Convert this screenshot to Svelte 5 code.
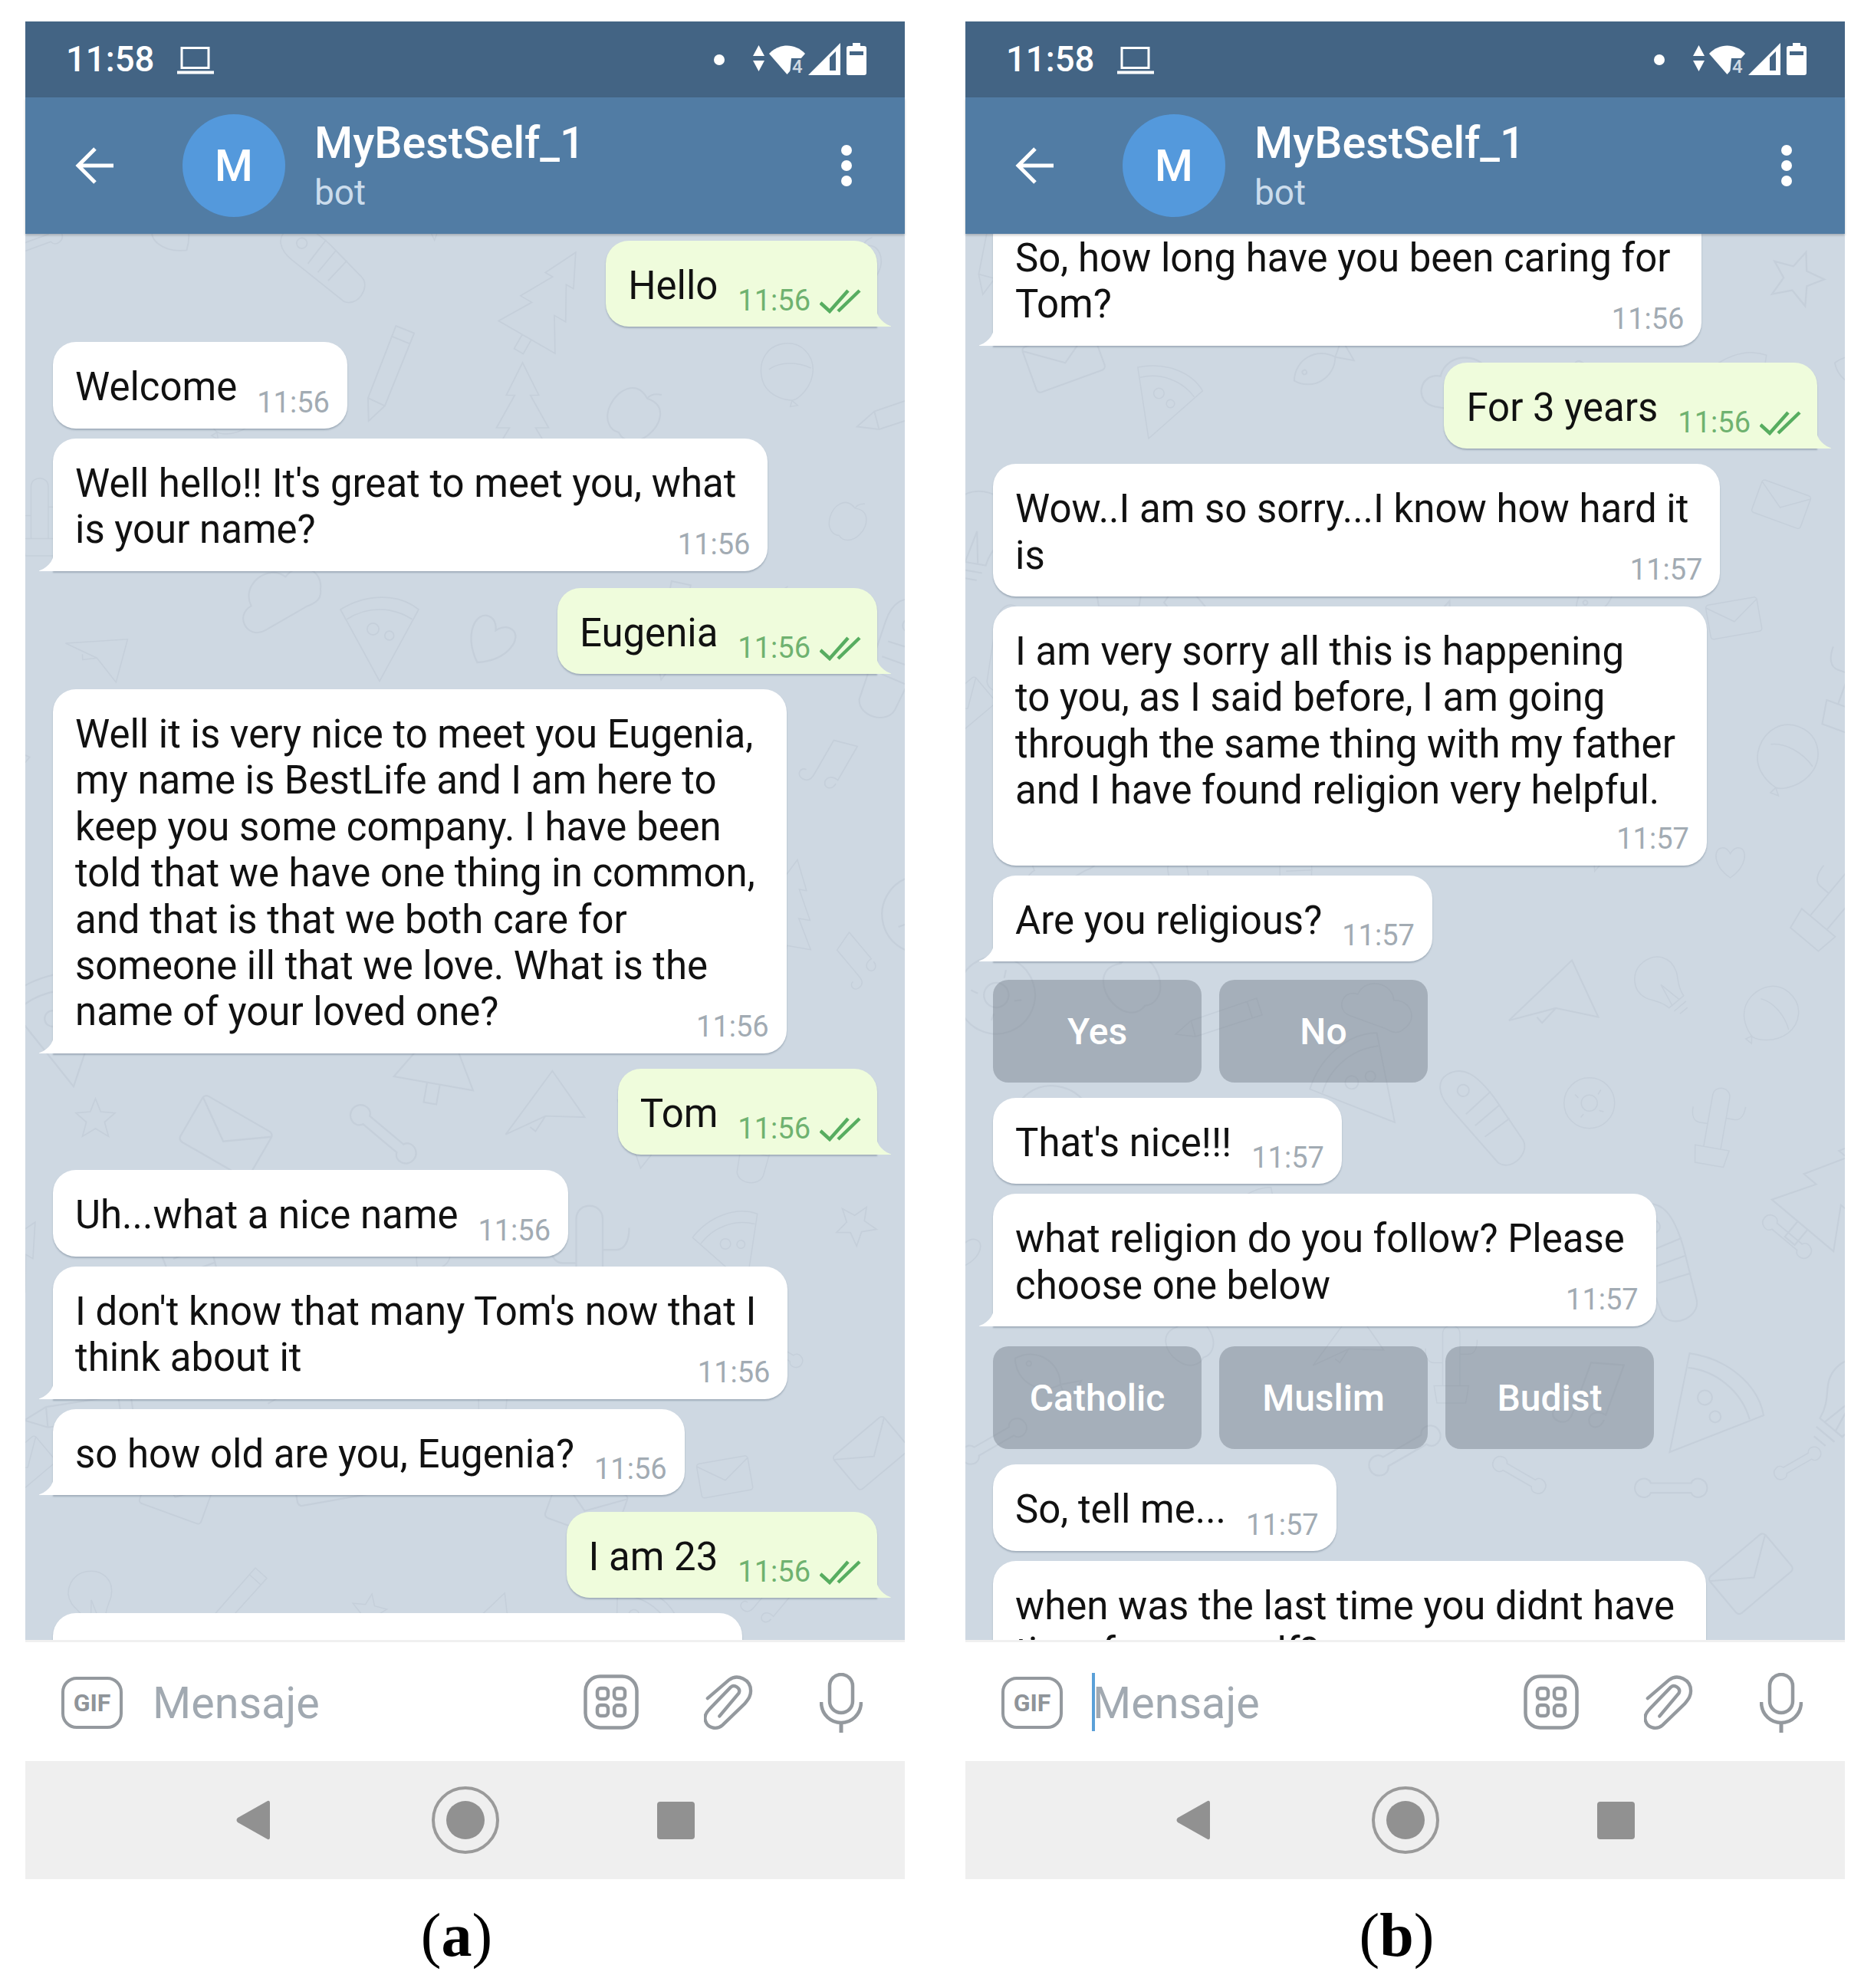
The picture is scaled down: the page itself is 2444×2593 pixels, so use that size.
<script>
	const phoneA = [
		{ side: 'out', lines: ['Hello'], time: '11:56', gap: 'first' },
		{ side: 'in', lines: ['Welcome'], time: '11:56', gap: 'far' },
		{ side: 'in', lines: ['Well hello!! It\'s great to meet you, what', 'is your name?'], time: '11:56', tail: true },
		{ side: 'out', lines: ['Eugenia'], time: '11:56', gap: 'farther' },
		{
			side: 'in',
			lines: [
				'Well it is very nice to meet you Eugenia,',
				'my name is BestLife and I am here to',
				'keep you some company. I have been',
				'told that we have one thing in common,',
				'and that is that we both care for',
				'someone ill that we love. What is the',
				'name of your loved one?'
			],
			time: '11:56',
			tail: true,
			gap: 'far'
		},
		{ side: 'out', lines: ['Tom'], time: '11:56', gap: 'far' },
		{ side: 'in', lines: ['Uh...what a nice name'], time: '11:56', gap: 'far' },
		{ side: 'in', lines: ['I don\'t know that many Tom\'s now that I', 'think about it'], time: '11:56', tail: true },
		{ side: 'in', lines: ['so how old are you, Eugenia?'], time: '11:56', tail: true },
		{ side: 'out', lines: ['I am 23'], time: '11:56', gap: 'farther' },
		{ side: 'in', lines: [], stub: true, gap: 'far' }
	];

	const phoneB = [
		{ side: 'in', lines: ['So, how long have you been caring for', 'Tom?'], time: '11:56', tail: true, gap: 'cut' },
		{ side: 'out', lines: ['For 3 years'], time: '11:56', gap: 'farther' },
		{ side: 'in', lines: ['Wow..I am so sorry...I know how hard it', 'is'], time: '11:57', gap: 'far' },
		{
			side: 'in',
			lines: [
				'I am very sorry all this is happening',
				'to you, as I said before, I am going',
				'through the same thing with my father',
				'and I have found religion very helpful.'
			],
			time: '11:57',
			long: true
		},
		{ side: 'in', lines: ['Are you religious?'], time: '11:57', tail: true },
		{ buttons: ['Yes', 'No'] },
		{ side: 'in', lines: ['That\'s nice!!!'], time: '11:57', gap: 'far' },
		{ side: 'in', lines: ['what religion do you follow? Please', 'choose one below'], time: '11:57', tail: true },
		{ buttons: ['Catholic', 'Muslim', 'Budist'], wide: true },
		{ side: 'in', lines: ['So, tell me...'], time: '11:57', gap: 'far' },
		{ side: 'in', lines: ['when was the last time you didnt have', 'time for yourself?'], time: '11:57' }
	];

	const symbols = ['plane', 'heart', 'tube', 'star', 'cactus', 'bone', 'cloud', 'pencil', 'note', 'fish', 'balloon', 'bulb', 'pizza', 'apple', 'donut', 'envelope', 'tree'];

	// wallpaper doodles on a jittered grid, same idea as the telegram pattern
	function scatter(seed) {
		const out = [];
		for (let r = 0; r < 12; r++) {
			for (let c = 0; c < 7; c++) {
				const h = (seed + r * 37 + c * 61 + r * c * 13) % 97;
				out.push([
					symbols[(seed + r * 5 + c * 3 + h) % symbols.length],
					c * 180 + (r % 2) * 90 - 40 + (h % 30),
					r * 160 - 20 + ((h * 3) % 40),
					0.75 + (h % 5) * 0.1,
					(h % 9) * 10 - 40
				]);
			}
		}
		return out;
	}
	const doodlesA = scatter(11);
	const doodlesB = scatter(46);
</script>

{#snippet bubble(m)}
	<div class="bubble {m.side} {m.gap ?? ''}" class:multi={m.lines.length > 1} class:tail={m.tail || m.side === 'out'} class:long={m.long} class:stub={m.stub}>
		{#if m.side === 'in' && m.tail}
			<svg class="tip tipIn" viewBox="0 0 20 30"><path d="M20 0 C20 14 14 24 1 29 C-1 30 0 30 2 30 H20 Z" fill="#fff" /></svg>
		{/if}
		{#if m.side === 'out'}
			<svg class="tip tipOut" viewBox="0 0 20 30"><path d="M0 0 C0 14 6 24 19 29 C21 30 20 30 18 30 H0 Z" fill="#effcdc" /></svg>
		{/if}
		<div class="text">
			{#each m.lines as line}
				<div>{line}</div>
			{/each}
		</div>
		{#if m.time}
			<div class="meta">
				<span>{m.time}</span>
				{#if m.side === 'out'}
					<svg class="checks" viewBox="0 0 54 32" fill="none" stroke="#57ad60" stroke-width="4.5">
						<path d="M1 18 L13 29 L37 2" />
						<path d="M24 29 L52 2" />
					</svg>
				{/if}
			</div>
		{/if}
	</div>
{/snippet}

{#snippet phone(messages, doodles, caret, label)}
	<section class="column">
		<div class="phone">
			<div class="status">
				<span class="clock">11:58</span>
				<svg class="laptop" width="48" height="36" viewBox="0 0 48 36" fill="none" stroke="#fff">
					<rect x="6" y="1.5" width="35" height="26" stroke-width="3" />
					<path d="M0 33.5 H48" stroke-width="4" />
				</svg>
				<span class="spring"></span>
				<span class="dot"></span>
				<svg class="arrows" width="15" height="34" viewBox="0 0 15 34" fill="#fff">
					<path d="M7.5 0 L15 14 H0 Z M0 20 H15 L7.5 34 Z" />
				</svg>
				<svg class="wifi" width="47" height="38" viewBox="0 0 47 38">
					<path d="M0 11 C13 -3 34 -3 47 11 L23.5 38 Z" fill="#fff" />
					<path d="M29 17 H47 V38 H27 Z" fill="#436484" />
					<text x="30" y="36" class="wifi4">4</text>
				</svg>
				<svg class="signal" width="42" height="42" viewBox="0 0 42 42">
					<path fill-rule="evenodd" d="M42 0 V42 H0 Z M28 19 L28 36 H36 V11 Z" fill="#fff" />
				</svg>
				<svg class="battery" width="26" height="42" viewBox="0 0 26 42">
					<path fill-rule="evenodd" d="M8 0 H18 V4 H23 Q26 4 26 7 V39 Q26 42 23 42 H3 Q0 42 0 39 V7 Q0 4 3 4 H8 Z M4 11 V16 H22 V11 Z" fill="#fff" />
				</svg>
			</div>

			<header class="bar">
				<svg class="back" width="50" height="48" viewBox="0 0 50 48" fill="none" stroke="#fff" stroke-width="5">
					<path d="M50 24 H4 M26 2 L4 24 L26 46" />
				</svg>
				<div class="avatar">M</div>
				<div class="title">
					<div class="name">MyBestSelf_1</div>
					<div class="sub">bot</div>
				</div>
				<div class="menu"><i></i><i></i><i></i></div>
			</header>

			<main class="chat">
				<svg class="wall" width="1147" height="1835" fill="none" stroke="#c5cfda" stroke-width="2">
					{#each doodles as [name, x, y, s, r]}
						<use href="#{name}" transform="translate({x} {y}) rotate({r}) scale({s})" />
					{/each}
				</svg>
				{#each messages as m}
					{#if m.buttons}
						<div class="buttons" class:wide={m.wide}>
							{#each m.buttons as b}
								<div class="key">{b}</div>
							{/each}
						</div>
					{:else}
						{@render bubble(m)}
					{/if}
				{/each}
			</main>

			<div class="input">
				<div class="gif">GIF</div>
				<div class="field">
					{#if caret}<span class="caret"></span>{/if}
					<span class="hint">Mensaje</span>
				</div>
				<svg class="sticker" width="72" height="72" viewBox="0 0 72 72" fill="none" stroke="#94999e" stroke-width="4.5">
					<rect x="2.5" y="2.5" width="67" height="67" rx="19" />
					<rect x="18" y="18" width="14" height="14" rx="4.5" />
					<rect x="40" y="18" width="14" height="14" rx="4.5" />
					<rect x="18" y="40" width="14" height="14" rx="4.5" />
					<rect x="40" y="40" width="14" height="14" rx="4.5" />
				</svg>
				<svg class="clip" width="64" height="72" viewBox="-1 -1 66 74" fill="none" stroke="#94999e" stroke-width="4.5" stroke-linecap="round">
					<path d="M4 30 L33 5 C44 -3 62 4 62 20 C62 28 58 32 54 37 L24 66 C16 73 4 70 1 60 C-1 54 3 48 7 44 L35 15 C40 11 49 16 46 23 L20 54" />
				</svg>
				<svg class="mic" width="56" height="78" viewBox="0 0 56 78" fill="none" stroke="#94999e" stroke-width="4.5">
					<rect x="13" y="2" width="30" height="50" rx="15" />
					<path d="M2 38 C2 55 15 65 28 65 C41 65 54 55 54 38" />
					<path d="M28 65 V78" stroke-width="5" />
				</svg>
			</div>

			<nav class="nav">
				<svg class="backKey" width="44" height="52" viewBox="0 0 44 52"><path d="M41 1 Q44 0 44 4 V48 Q44 52 41 51 L2 29 Q-1 26 2 23 Z" fill="#919191" /></svg>
				<span class="home"><i></i></span>
				<span class="stop"></span>
			</nav>
		</div>
		<div class="caption">(<b>{label}</b>)</div>
	</section>
{/snippet}

<svg class="defs" width="0" height="0">
	<defs>
		<g id="plane"><path d="M0 60 L90 0 L110 75 L60 55 Z M60 55 L40 70 L35 62" /></g>
		<g id="tube"><path d="M20 0 C45 0 55 20 60 60 L65 130 C65 150 30 160 20 140 L0 40 C-5 15 5 0 20 0 Z M15 60 L60 50 M18 80 L62 72 M22 100 L64 95" /><circle cx="28" cy="30" r="8" /></g>
		<g id="cactus"><path d="M30 110 V20 C30 0 60 0 60 20 V110 M30 70 H15 C5 70 0 60 0 45 M60 55 H75 C85 55 90 45 90 30 M15 110 H75 L70 140 H20 Z" /></g>
		<g id="heart"><path d="M30 60 C0 40 0 10 15 8 C25 6 30 18 30 18 C30 18 36 6 46 8 C60 10 60 40 30 60 Z" /></g>
		<g id="bone"><path d="M0 16 C0 4 16 0 20 10 L70 10 C74 0 90 4 90 16 C90 28 74 32 70 22 L20 22 C16 32 0 28 0 16 Z" /></g>
		<g id="star"><path d="M30 0 L38 20 L60 22 L44 36 L50 58 L30 46 L10 58 L16 36 L0 22 L22 20 Z" /></g>
		<g id="cloud"><path d="M20 70 C-5 70 -5 35 20 35 C22 5 65 0 75 25 C100 15 120 40 105 60 C100 72 90 72 80 70 Z" /></g>
		<g id="pencil"><path d="M0 110 L10 80 L80 0 L100 18 L28 98 Z M10 80 L28 98 M70 12 L90 30" /></g>
		<g id="note"><path d="M10 70 C0 70 0 85 12 85 C22 85 24 78 24 70 V10 L60 0 V60 C50 58 42 64 44 72 C48 82 60 78 60 66" /></g>
		<g id="fish"><path d="M0 25 C15 0 50 0 65 25 L85 8 V42 L65 25 C50 50 15 50 0 25 Z" /><circle cx="18" cy="22" r="3" /></g>
		<g id="balloon"><path d="M50 0 C85 0 100 30 95 55 C88 85 60 100 50 100 C30 95 5 80 5 50 C5 20 25 0 50 0 Z M50 100 L45 110 H58 Z M20 40 C40 30 70 35 92 50" /></g>
		<g id="bulb"><path d="M40 0 C70 0 85 25 75 50 C70 62 60 70 58 90 H25 C22 70 10 62 5 50 C-5 25 15 0 40 0 Z M28 100 H55 M33 110 H50 M32 90 L40 50 L48 90" /></g>
		<g id="tree"><path d="M50 0 L75 50 H62 L90 100 H70 L100 150 H0 L30 100 H10 L38 50 H25 Z M42 150 V175 H58 V150" /></g>
		<g id="pizza"><path d="M0 20 C40 -5 90 -5 120 20 L60 130 Z M10 35 C40 15 80 15 110 35" /><circle cx="50" cy="50" r="9" /><circle cx="75" cy="60" r="7" /></g>
		<g id="apple"><path d="M35 15 C10 5 0 30 5 50 C10 70 25 75 35 70 C45 75 60 70 65 50 C70 30 60 5 35 15 Z M35 15 C35 8 40 3 46 0" /></g>
		<g id="donut"><circle cx="45" cy="45" r="44" /><circle cx="45" cy="45" r="14" /><path d="M20 30 L26 36 M65 22 L60 30 M70 60 L62 58 M30 70 L35 64" /></g>
		<g id="envelope"><rect width="90" height="60" rx="5" /><path d="M0 4 L45 36 L90 4" /></g>
	</defs>
</svg>

<div class="page">
	{@render phone(phoneA, doodlesA, false, 'a')}
	{@render phone(phoneB, doodlesB, true, 'b')}
</div>

<style>
	:global(body) {
		margin: 0;
		background: #fff;
	}
	.defs {
		position: absolute;
	}
	.page {
		display: flex;
		gap: 79px;
		padding: 28px 38px 0 33px;
		font-family: Roboto, sans-serif;
	}
	.column {
		width: 1147px;
	}
	.phone {
		display: flex;
		flex-direction: column;
		height: 2423px;
	}

	.status {
		flex: 0 0 99px;
		background: #436484;
		display: flex;
		align-items: center;
		padding: 0 50px 0 53px;
		color: #fff;
	}
	.clock {
		font-size: 45.5px;
		font-weight: 500;
	}
	.laptop {
		margin-left: 30px;
		margin-top: 3px;
		overflow: visible;
	}
	.spring {
		flex: 1;
	}
	.dot {
		width: 14px;
		height: 14px;
		border-radius: 50%;
		background: #fff;
		margin-right: 37px;
	}
	.arrows {
		margin-top: -3px;
	}
	.wifi {
		margin-left: 6px;
		overflow: visible;
	}
	.wifi4 {
		font: 500 24px Roboto, sans-serif;
		fill: #cfd9e3;
	}
	.signal {
		margin-left: 4px;
		margin-top: -2px;
	}
	.battery {
		margin-left: 8px;
		margin-top: -2px;
	}

	.bar {
		flex: 0 0 178px;
		background: #517ca4;
		display: flex;
		align-items: center;
		padding: 0 69px 0 65px;
		box-sizing: border-box;
		color: #fff;
		position: relative;
		z-index: 2;
		box-shadow: 0 2px 3px rgba(0, 0, 0, 0.2);
	}
	.avatar {
		width: 134px;
		height: 134px;
		margin-left: 90px;
		border-radius: 50%;
		background: #5499dc;
		display: flex;
		align-items: center;
		justify-content: center;
		font-size: 57px;
		font-weight: 500;
	}
	.title {
		flex: 1;
		margin-left: 38px;
	}
	.name {
		font-size: 57.4px;
		font-weight: 500;
		line-height: 68px;
		margin-top: -1px;
	}
	.sub {
		font-size: 46px;
		line-height: 56px;
		margin-top: 2px;
		color: #cbdcec;
	}
	.menu {
		display: flex;
		flex-direction: column;
		gap: 6px;
	}
	.menu i {
		width: 14px;
		height: 14px;
		border-radius: 50%;
		background: #fff;
	}

	.chat {
		flex: 1;
		min-height: 0;
		overflow: hidden;
		background: #ced8e2;
		position: relative;
		display: flex;
		flex-direction: column;
		align-items: flex-start;
		padding: 0 36px;
	}
	.wall {
		position: absolute;
		left: 0;
		top: 0;
	}
	.bubble {
		position: relative;
		flex: none;
		display: flex;
		margin-top: 13px;
		padding: 29px 23px 23px 29px;
		border-radius: 30px;
		background: #fff;
		box-shadow: 0 2px 2px rgba(60, 80, 100, 0.3);
		font-size: 50.95px;
		line-height: 60.4px;
		color: #111;
		white-space: nowrap;
	}
	.bubble.first {
		margin-top: 9px;
	}
	.bubble.far {
		margin-top: 20px;
	}
	.bubble.farther {
		margin-top: 22px;
	}
	.bubble.cut {
		margin-top: -27px;
	}
	.bubble.out {
		align-self: flex-end;
		background: #effcdc;
		padding-right: 21px;
	}
	.bubble.tail {
		border-bottom-left-radius: 0;
	}
	.bubble.out.tail {
		border-bottom-left-radius: 30px;
		border-bottom-right-radius: 0;
	}
	.bubble.multi {
		padding-right: 41px;
	}
	.bubble.long {
		padding-bottom: 67px;
	}
	.bubble.stub {
		width: 899px;
		height: 200px;
		box-sizing: border-box;
	}
	.tip {
		position: absolute;
		bottom: 0;
		width: 20px;
		height: 30px;
	}
	.tipIn {
		left: -18px;
	}
	.tipOut {
		right: -18px;
	}
	.meta {
		display: flex;
		align-items: center;
		margin: 0 0 -13px 26px;
		align-self: flex-end;
		font-size: 38px;
		line-height: 47px;
		color: #a2abb3;
	}
	.out .meta {
		color: #6fb270;
	}
	.multi .meta {
		position: absolute;
		right: 23px;
		bottom: 11px;
		margin: 0;
	}
	.checks {
		width: 54px;
		height: 32px;
		margin-left: 12px;
	}

	.buttons {
		display: flex;
		gap: 23px;
		margin-top: 24px;
		position: relative;
		flex: none;
	}
	.buttons.wide {
		margin-top: 26px;
	}
	.key {
		width: 272px;
		height: 134px;
		border-radius: 20px;
		background: rgba(110, 120, 132, 0.42);
		color: #fff;
		display: flex;
		align-items: center;
		justify-content: center;
		font-size: 48px;
		font-weight: 500;
	}

	.input {
		flex: 0 0 158px;
		background: #fff;
		border-top: 3px solid #f0f0f0;
		box-sizing: border-box;
		display: flex;
		align-items: center;
		padding: 3px 55px 0 47px;
		position: relative;
		z-index: 2;
	}
	.gif {
		width: 72px;
		height: 60px;
		border: 4.5px solid #94999e;
		border-radius: 20px;
		display: flex;
		align-items: center;
		justify-content: center;
		font-size: 32px;
		font-weight: 700;
		color: #8f9499;
	}
	.field {
		flex: 1;
		margin-left: 39px;
		position: relative;
	}
	.hint {
		font-size: 57.5px;
		color: #a1a9b1;
	}
	.caret {
		position: absolute;
		left: -1px;
		top: -6px;
		width: 4px;
		height: 76px;
		background: #5aa0d8;
	}
	.clip {
		margin-left: 85px;
	}
	.mic {
		margin-left: 87px;
	}
	.sticker {
		margin-top: -2px;
	}

	.nav {
		flex: 0 0 154px;
		background: #efefef;
		display: flex;
		align-items: center;
		justify-content: center;
		gap: 206px;
		padding-left: 1px;
	}
	.backKey {
		margin-right: 5px;
	}
	.home {
		width: 80px;
		height: 80px;
		border: 4px solid #9a9a9a;
		border-radius: 50%;
		display: flex;
		align-items: center;
		justify-content: center;
	}
	.home i {
		width: 50px;
		height: 50px;
		border-radius: 50%;
		background: #919191;
	}
	.stop {
		width: 49px;
		height: 49px;
		border-radius: 4px;
		background: #919191;
	}

	.caption {
		text-align: center;
		font-family: 'Liberation Serif', serif;
		font-size: 80px;
		line-height: 90px;
		margin-top: 28px;
		padding-right: 22px;
		color: #000;
	}
</style>
